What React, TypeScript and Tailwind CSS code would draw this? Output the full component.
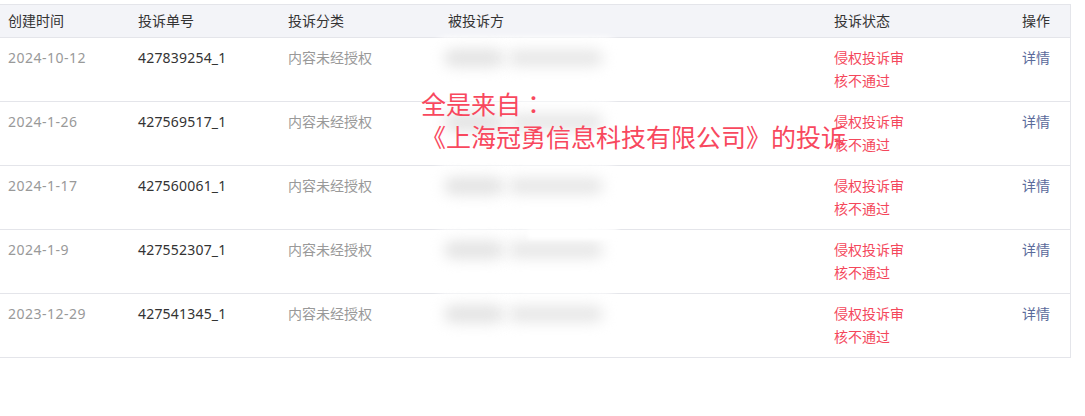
import React from "react";

const rows = [
  { date: "2024-10-12", id: "427839254_1", slant: false },
  { date: "2024-1-26", id: "427569517_1", slant: false },
  { date: "2024-1-17", id: "427560061_1", slant: false },
  { date: "2024-1-9", id: "427552307_1", slant: true },
  { date: "2023-12-29", id: "427541345_1", slant: false },
];

const grid = "grid grid-cols-[130px_150px_160px_386px_188px_57px]";

function Blob({ slant }: { slant: boolean }) {
  return (
    <div className="absolute left-[-12px] top-[-9px] w-[196px] h-[42px] pointer-events-none">
      <div className="absolute inset-0 rounded-[21px] bg-white blur-[3px]" />
      <div className="absolute left-[16px] top-[12px] w-[60px] h-[18px] rounded-full bg-[#e3e3e3] blur-[7px]" />
      <div className="absolute left-[80px] top-[13px] w-[95px] h-[16px] rounded-full bg-[#e6e6e6] blur-[7px]" />
      {slant && <div className="absolute left-[100px] top-[0px] w-[90px] h-[10px] bg-white blur-[2px]" />}
    </div>
  );
}

export default function App() {
  return (
    <div
      className="w-[1085px] h-[416px] bg-white relative pt-[4px] text-[14px]"
      style={{ fontFamily: '"Noto Sans", "Noto Sans CJK SC", sans-serif' }}
    >
      <div className="w-[1071px] border-r border-[#e4e5ea]">
        <div className={`${grid} h-[34px] bg-[#f3f4f8] border-y border-[#e4e5ea] items-center text-[#333] leading-[22px]`}>
          <div className="pl-[8px]">创建时间</div>
          <div className="pl-[8px]">投诉单号</div>
          <div className="pl-[8px]">投诉分类</div>
          <div className="pl-[8px]">被投诉方</div>
          <div className="pl-[8px]">投诉状态</div>
          <div className="pl-[8px]">操作</div>
        </div>
        {rows.map((r) => (
          <div key={r.id} className={`${grid} h-[64px] border-b border-[#e4e5ea] leading-[23px] pt-[8px]`}>
            <div className="pl-[8px] text-[#999] tracking-[0.5px]">{r.date}</div>
            <div className="pl-[8px] text-[#333] tracking-[0.2px]">{r.id}</div>
            <div className="pl-[8px] text-[#999]">内容未经授权</div>
            <div className="pl-[8px] relative">
              <Blob slant={r.slant} />
            </div>
            <div className="pl-[8px] text-[#f4475b]">
              <div>侵权投诉审</div>
              <div>核不通过</div>
            </div>
            <div className="pl-[8px] text-[#5b6b9b]">详情</div>
          </div>
        ))}
      </div>
      <div
        className="absolute left-[421px] top-[87px] text-[#f8485e] text-[25px] leading-[33px]"
        style={{ fontFamily: '"Noto Sans CJK SC", sans-serif' }}
      >
        <div>
          全是来自<span style={{ fontFamily: '"Noto Sans CJK TC", sans-serif' }}>：</span>
        </div>
        <div>
          <span style={{ fontFamily: '"Noto Sans CJK TC", sans-serif' }}>《</span>上海冠勇信息科技有限公司
          <span style={{ fontFamily: '"Noto Sans CJK TC", sans-serif' }}>》</span>的投诉
        </div>
      </div>
    </div>
  );
}
